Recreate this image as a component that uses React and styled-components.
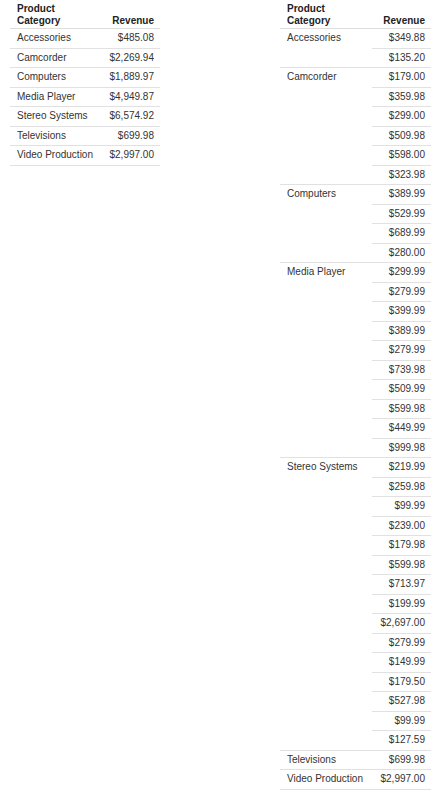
import React from "react";
import styled, { createGlobalStyle } from "styled-components";

const GlobalStyle = createGlobalStyle`
  html, body {
    margin: 0;
    padding: 0;
    background: #ffffff;
  }
  body {
    font-family: "Liberation Sans", Arial, sans-serif;
  }
`;

const summary = [
  ["Accessories", "$485.08"],
  ["Camcorder", "$2,269.94"],
  ["Computers", "$1,889.97"],
  ["Media Player", "$4,949.87"],
  ["Stereo Systems", "$6,574.92"],
  ["Televisions", "$699.98"],
  ["Video Production", "$2,997.00"],
];

const detail = [
  ["Accessories", ["$349.88", "$135.20"]],
  ["Camcorder", ["$179.00", "$359.98", "$299.00", "$509.98", "$598.00", "$323.98"]],
  ["Computers", ["$389.99", "$529.99", "$689.99", "$280.00"]],
  [
    "Media Player",
    ["$299.99", "$279.99", "$399.99", "$389.99", "$279.99", "$739.98", "$509.99", "$599.98", "$449.99", "$999.98"],
  ],
  [
    "Stereo Systems",
    [
      "$219.99", "$259.98", "$99.99", "$239.00", "$179.98", "$599.98", "$713.97", "$199.99",
      "$2,697.00", "$279.99", "$149.99", "$179.50", "$527.98", "$99.99", "$127.59",
    ],
  ],
  ["Televisions", ["$699.98"]],
  ["Video Production", ["$2,997.00"]],
];

const Page = styled.div`
  display: flex;
  justify-content: space-between;
  align-items: flex-start;
  padding: 2px 13px 0 10px;
`;

const Table = styled.table`
  border-collapse: collapse;
  table-layout: fixed;
  width: ${(p) => p.$width}px;
  font-size: 10px;
  color: #333333;
`;

const HeadCell = styled.th`
  font-weight: bold;
  color: #222222;
  line-height: 11.5px;
  padding: 1px 6px 2px 7px;
  vertical-align: bottom;
  text-align: ${(p) => (p.$right ? "right" : "left")};
  border-bottom: 1px solid #dddddd;
`;

const Cell = styled.td`
  line-height: 12px;
  height: 12px;
  padding: 3px 6px 3.5px 7px;
  vertical-align: top;
  white-space: nowrap;
  text-align: ${(p) => (p.$right ? "right" : "left")};
  border-bottom: ${(p) => (p.$noLine ? "none" : "1px solid #e1e1e1")};
`;

function Header() {
  return (
    <thead>
      <tr>
        <HeadCell>
          Product
          <br />
          Category
        </HeadCell>
        <HeadCell $right>Revenue</HeadCell>
      </tr>
    </thead>
  );
}

export default function App() {
  return (
    <>
      <GlobalStyle />
      <Page>
        <Table $width={150}>
          <colgroup>
            <col style={{ width: 92 }} />
            <col />
          </colgroup>
          <Header />
          <tbody>
            {summary.map(([cat, rev]) => (
              <tr key={cat}>
                <Cell>{cat}</Cell>
                <Cell $right>{rev}</Cell>
              </tr>
            ))}
          </tbody>
        </Table>

        <Table $width={151}>
          <colgroup>
            <col style={{ width: 92 }} />
            <col />
          </colgroup>
          <Header />
          <tbody>
            {detail.flatMap(([cat, revs]) =>
              revs.map((rev, i) => (
                <tr key={cat + i}>
                  {i === 0 && <Cell rowSpan={revs.length}>{cat}</Cell>}
                  <Cell $right>{rev}</Cell>
                </tr>
              ))
            )}
          </tbody>
        </Table>
      </Page>
    </>
  );
}
